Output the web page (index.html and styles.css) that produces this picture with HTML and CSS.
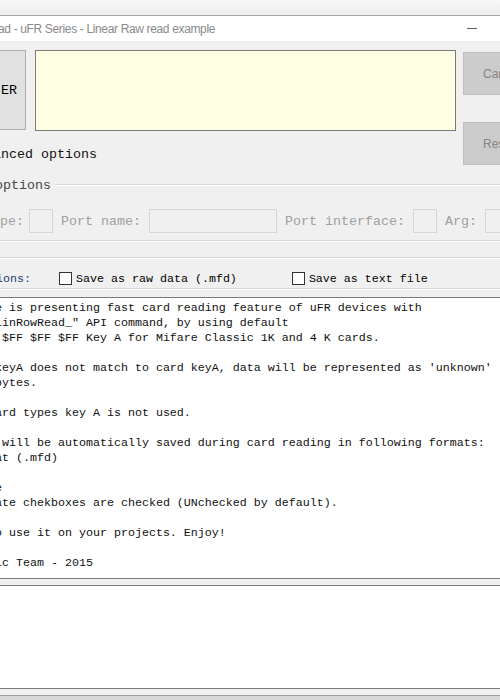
FILE: index.html
```html
<!DOCTYPE html>
<html lang="en">
<head>
    <meta charset="UTF-8">
    <title>uFR Series - Linear Raw read example</title>
    <link rel="stylesheet" href="styles.css">
</head>
<body>

    <div class="desktop"></div>

    <div class="window">
        <div class="titlebar">
            <span class="title">ad - uFR Series - Linear Raw read example</span>
            <span class="min-btn"></span>
        </div>

        <div class="client">
            <div class="top">
                <button class="btn-reader">ER</button>
                <div class="status-box"></div>
                <div class="side-buttons">
                    <button class="btn-side">Cancel</button>
                    <button class="btn-side">Reset</button>
                </div>
                <label class="advanced">anced options</label>
            </div>

            <div class="group-head">
                <span>options</span>
                <i class="head-line"></i>
            </div>

            <div class="port-row">
                <span class="lbl lbl-type">pe:</span>
                <span class="field field-type"></span>
                <span class="lbl">Port name:</span>
                <span class="field field-name"></span>
                <span class="lbl">Port interface:</span>
                <span class="field field-sm"></span>
                <span class="lbl">Arg:</span>
                <span class="field field-arg"></span>
            </div>

            <div class="rule rule-a"></div>
            <div class="rule rule-b"></div>

            <div class="save-row">
                <span class="save-lbl">ions:</span>
                <label class="check check-raw"><span class="box"></span>Save as raw data (.mfd)</label>
                <label class="check check-txt"><span class="box"></span>Save as text file</label>
            </div>

            <div class="rule rule-c"></div>

            <pre class="log">e is presenting fast card reading feature of uFR devices with
LinRowRead_" API command, by using default
 $FF $FF $FF Key A for Mifare Classic 1K and 4 K cards.

keyA does not match to card keyA, data will be represented as 'unknown' (??)
bytes.

ard types key A is not used.

 will be automatically saved during card reading in following formats:
at (.mfd)

e
ate chekboxes are checked (UNchecked by default).

o use it on your projects. Enjoy!

ic Team - 2015</pre>

            <div class="log2"></div>
            <div class="foot"></div>
        </div>
    </div>

</body>
</html>
```

FILE: styles.css
```css
html,
body {
    margin: 0;
    padding: 0;
}

body {
    width: 500px;
    height: 700px;
    overflow: hidden;
    background: linear-gradient(#e4e4e4, #d8d8d8);
    font-family: 'Liberation Mono', 'Courier New', monospace;
}

.desktop {
    height: 15px;
    background: linear-gradient(#f8f8f8, #ececec);
    border-bottom: 1px solid #a6a6a6;
}

.titlebar {
    height: 25px;
    background-color: #ffffff;
    display: flex;
    align-items: center;
    justify-content: space-between;
}

.title {
    font-family: 'Liberation Sans', Arial, sans-serif;
    font-size: 12px;
    letter-spacing: -0.35px;
    color: #8a8a8a;
    margin-left: -2px;
    white-space: nowrap;
}

.min-btn {
    width: 10px;
    height: 1px;
    background-color: #5a5a5a;
    margin-right: 23px;
}

.client {
    background-color: #f0f0f0;
}

.top {
    display: grid;
    grid-template-columns: 27px 421px 1fr;
    grid-template-rows: 81px 34px;
    column-gap: 9px;
    margin-left: -1px;
    padding-top: 9px;
}

.btn-reader {
    height: 80px;
    margin: 0;
    padding: 0 0 0 1px;
    text-align: left;
    font-family: 'Liberation Mono', monospace;
    font-size: 13.33px;
    color: #000;
    background-color: #e1e1e1;
    border: 1px solid #adadad;
}

.status-box {
    background-color: #ffffe3;
    border: 1px solid #7a7a7a;
}

.side-buttons {
    grid-row: 1 / 3;
    grid-column: 3;
    margin-left: -2px;
    padding-top: 2px;
    display: flex;
    flex-direction: column;
    gap: 27px;
}

.btn-side {
    width: 70px;
    height: 43px;
    margin: 0;
    padding: 0 0 0 19px;
    text-align: left;
    font-family: 'Liberation Sans', Arial, sans-serif;
    font-size: 12px;
    color: #858585;
    background-color: #cccccc;
    border: 1px solid #bfbfbf;
}

.advanced {
    grid-column: 1 / 3;
    align-self: start;
    margin: 16px 0 0 -6px;
    font-size: 13.33px;
    line-height: 16px;
    color: #111;
    white-space: nowrap;
}

.group-head {
    display: flex;
    align-items: center;
    height: 14px;
    margin-top: 13px;
    margin-left: -5px;
    font-size: 13.33px;
    color: #474747;
}

.head-line {
    flex: 1;
    height: 0;
    border-top: 1px solid #d9d9d9;
    border-bottom: 1px solid #ffffff;
    margin-left: 4px;
}

.port-row {
    display: flex;
    align-items: center;
    height: 24px;
    margin-top: 17px;
    font-size: 13.33px;
    color: #a0a0a0;
    white-space: nowrap;
}

.lbl {
    flex-shrink: 0;
    margin-left: 8px;
}

.lbl-type {
    margin-left: 0;
}

.field {
    flex-shrink: 0;
    box-sizing: border-box;
    height: 24px;
    margin-left: 8px;
    background-color: #f0f0f0;
    border: 1px solid #d7d7d7;
}

.field-type {
    width: 24px;
    margin-left: 5px;
}

.field-sm {
    width: 24px;
}

.field-name {
    width: 128px;
}

.field-arg {
    width: 40px;
}

.rule {
    height: 0;
    border-top: 1px solid #d5d5d5;
    border-bottom: 1px solid #ffffff;
}

.rule-a {
    margin-top: 7px;
}

.rule-b {
    margin-top: 15px;
}

.save-row {
    display: flex;
    align-items: center;
    height: 13px;
    padding-top: 13px;
    font-size: 11.67px;
    white-space: nowrap;
}

.save-lbl {
    margin-left: -4px;
    color: #1d3d78;
}

.check {
    display: flex;
    align-items: center;
    color: #000;
}

.check-raw {
    margin-left: 28px;
}

.check-txt {
    margin-left: 55px;
}

.box {
    width: 11px;
    height: 11px;
    margin-right: 4px;
    background-color: #ffffff;
    border: 1px solid #333333;
}

.rule-c {
    margin-top: 3px;
}

.log {
    height: 277px;
    margin: 7px 0 0 -5px;
    padding: 3px 0 0 0;
    background-color: #ffffff;
    border-top: 1px solid #7a7a7a;
    border-bottom: 1px solid #7a7a7a;
    font-family: 'Liberation Mono', 'Courier New', monospace;
    font-size: 11.67px;
    line-height: 15px;
    color: #111;
    overflow: hidden;
}

.log2 {
    height: 102px;
    margin-top: 6px;
    background-color: #ffffff;
    border-top: 1px solid #7a7a7a;
    border-bottom: 1px solid #7a7a7a;
}

.foot {
    height: 6px;
    border-bottom: 1px solid #a0a0a0;
}
```
